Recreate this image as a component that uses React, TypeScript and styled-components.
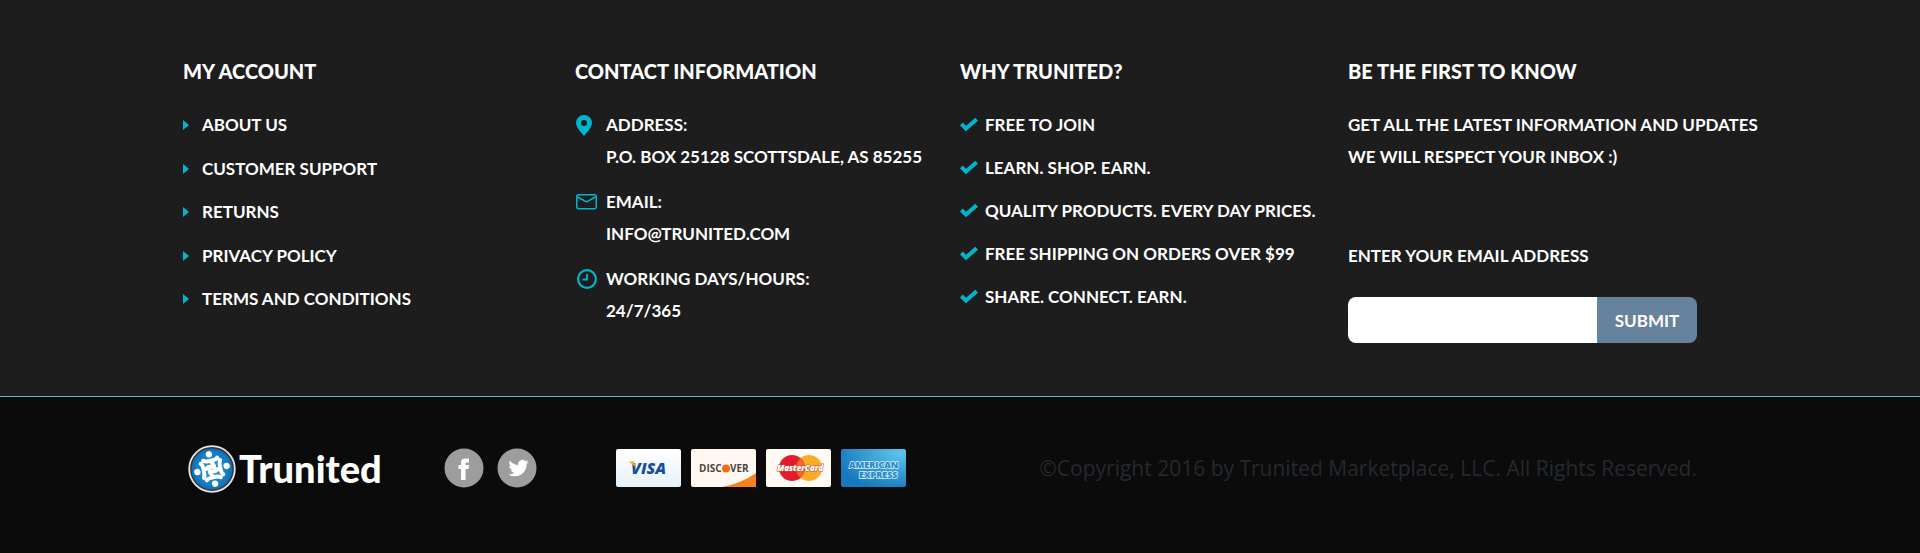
import React from "react";
import styled, { createGlobalStyle } from "styled-components";

const lato = `Lato, "Open Sans", sans-serif`;
const cyan = "#00b6cd";

const GlobalStyle = createGlobalStyle`
  *, *::before, *::after { box-sizing: border-box; }
  body { margin: 0; background: #0b0b0b; color: #fff; font-family: ${lato}; }
  ul, p, h2 { margin: 0; padding: 0; }
  ul { list-style: none; }
  a { color: inherit; text-decoration: none; }
`;

const Upper = styled.section`
  background: #1d1d1d;
  border-bottom: 1px solid #4cc3da;
  padding: 55px 160px 53px 183px;
`;

const Columns = styled.div`
  display: grid;
  grid-template-columns: 392fr 385fr 388fr 412fr;
`;

const Column = styled.section`
  min-width: 0;
  font-size: 17px;
  font-weight: 700;
  line-height: 32px;
  white-space: nowrap;
`;

const Heading = styled.h2`
  font-size: 20px;
  font-weight: 900;
  line-height: 32px;
  margin-bottom: 22px;
`;

const List = styled.ul<{ $gap: number; $minHeight?: number }>`
  display: flex;
  flex-direction: column;
  justify-content: space-between;
  gap: ${(p) => p.$gap}px;
  min-height: ${(p) => p.$minHeight ?? 0}px;
`;

const Item = styled.li<{ $icon: number }>`
  display: grid;
  grid-template-columns: ${(p) => p.$icon}px 1fr;
  svg { margin-top: 6px; }
`;

const IconCell = styled.span`
  display: flex;
  align-items: center;
  height: 32px;
  svg { margin: 0; }
`;

const Lines = styled.p`
  margin-bottom: 67px;
`;

const Form = styled.form`
  display: flex;
  flex-direction: column;
  align-items: flex-start;
`;

const Field = styled.div`
  display: flex;
  width: 349px;
  max-width: 100%;
  height: 46px;
  margin-top: 25px;
  border-radius: 8px;
  overflow: hidden;
`;

const Input = styled.input`
  flex: 1;
  min-width: 0;
  border: 0;
  padding: 0 12px;
  background: #fff;
  font: 400 17px ${lato};
`;

const Submit = styled.button`
  width: 100px;
  border: 0;
  background: #67829d;
  color: #fff;
  font: 700 17px ${lato};
`;

const Lower = styled.section`
  display: flex;
  align-items: center;
  min-height: 156px;
  padding: 0 223px 15px 186px;
`;

const Brand = styled.a`
  display: flex;
  margin-right: 59px;
`;

const Group = styled.div<{ $gap: number; $after: number }>`
  display: flex;
  gap: ${(p) => p.$gap}px;
  margin-right: ${(p) => p.$after}px;
  a { display: flex; }
`;

const Copyright = styled.p`
  margin-left: auto;
  color: #24292f;
  font: 400 21px/32px "Open Sans", sans-serif;
  white-space: nowrap;
`;

const Arrow = () => (
  <svg width="6" height="10" viewBox="0 0 6 10" aria-hidden="true"><path d="M0 0L6 5L0 10Z" fill={cyan} /></svg>
);
const Check = () => (
  <svg width="18" height="16" viewBox="0 0 18 16" aria-hidden="true"><path d="M1.400 7L6 11.600L16.600 2.200" fill="none" stroke={cyan} strokeWidth="4" /></svg>
);
const Pin = () => (
  <svg width="17" height="21" viewBox="-1 0 17 21" aria-hidden="true"><path fillRule="evenodd" fill={cyan} d="M8 0A8 8 0 0 1 16 8C16 12 11 17.500 8 21C5 17.500 0 12 0 8A8 8 0 0 1 8 0ZM8 5A3 3 0 1 0 8 11A3 3 0 1 0 8 5Z" /></svg>
);
const Mail = () => (
  <svg width="22" height="21" viewBox="-1 0 22 21" fill="none" stroke={cyan} strokeWidth="1.500" aria-hidden="true"><rect x=".75" y="2.750" width="19.500" height="14" rx="2" /><path d="M1.500 5L10.500 10L19.500 5" /></svg>
);
const Clock = () => (
  <svg width="22" height="21" viewBox="0 0 22 21" fill="none" stroke={cyan} aria-hidden="true"><circle cx="12" cy="10" r="8.900" strokeWidth="2.200" /><path d="M12 5V10.500H7.500" strokeWidth="1.800" /></svg>
);

const Figure = () => (
  <g>
    <circle cx="0" cy="-15" r="3.200" fill="#fff" />
    <path d="M-7-9.800Q-5-8.400-2-8.400H3Q6-8.400 7.500-10M1.500-8V-2.500H-3.500" fill="none" stroke="#fff" strokeWidth="4" strokeLinecap="round" strokeLinejoin="round" />
  </g>
);
const Logo = () => (
  <svg width="199" height="50" viewBox="0 0 199 50" role="img" aria-label="Trunited">
    <defs><radialGradient id="orb"><stop offset="0" stopColor="#36a2e4" /><stop offset="1" stopColor="#0c70b8" /></radialGradient></defs>
    <circle cx="26" cy="26" r="22.800" fill="#3b3432" stroke="#e8e4e2" strokeWidth="1.800" />
    <circle cx="26" cy="26" r="20.500" fill="url(#orb)" />
    {[0, 90, 180, 270].map((a) => <g key={a} transform={`translate(26 26) rotate(${a - 12})`}><Figure /></g>)}
    <text x="53" y="40" fontFamily={lato} fontSize="38" fontWeight="900" fill="#fff">Trunited</text>
  </svg>
);

const Facebook = () => (
  <svg width="40" height="40" viewBox="0 0 40 40" role="img" aria-label="Facebook"><circle cx="20" cy="20" r="19.500" fill="#9d9d9d" /><path fill="#fff" d="M17 32V21H14.500V17H17V14.500Q17 10.500 21.500 10.500H25V14.500H22.500Q21.500 14.500 21.500 15.500V17H25L24.500 21H21.500V32Z" /></svg>
);
const Twitter = () => (
  <svg width="40" height="40" viewBox="0 0 40 40" role="img" aria-label="Twitter"><circle cx="20" cy="20" r="19.500" fill="#9d9d9d" /><g transform="translate(11.500 10) scale(.84)"><path fill="#fff" d="M23.950 4.570a10 10 0 0 1-2.820.77 4.960 4.960 0 0 0 2.160-2.720c-.95.55-2 .95-3.130 1.180a4.920 4.920 0 0 0-8.380 4.480C7.690 8.090 4.070 6.130 1.640 3.160a4.820 4.820 0 0 0-.67 2.480c0 1.700.87 3.210 2.190 4.100a4.900 4.900 0 0 1-2.230-.62v.06a4.920 4.920 0 0 0 3.950 4.830 5 5 0 0 1-2.210.08 4.940 4.940 0 0 0 4.600 3.420A9.870 9.870 0 0 1 0 19.540a14 14 0 0 0 7.550 2.210c9.050 0 14-7.500 14-13.980 0-.21 0-.42-.02-.63a9.940 9.940 0 0 0 2.420-2.570Z" /></g></svg>
);

const cardFont = `"Open Sans", sans-serif`;
const Cards = () => (
  <>
    <svg width="65" height="38" viewBox="0 0 65 38" role="img" aria-label="Visa">
      <defs><linearGradient id="visa" x2="0" y2="1"><stop stopColor="#fff" /><stop offset="1" stopColor="#e7f1f8" /></linearGradient></defs>
      <rect width="65" height="38" rx="2" fill="url(#visa)" />
      <text x="15" y="25" fontFamily={cardFont} fontSize="16" fontWeight="800" fontStyle="italic" fill="#15509b">VISA</text>
      <path d="M13 12.500H18L20.500 19Z" fill="#f5a623" />
    </svg>
    <svg width="65" height="38" viewBox="0 0 65 38" role="img" aria-label="Discover">
      <rect width="65" height="38" rx="2" fill="#fff8f2" />
      <path d="M31 38Q51 34 65 24V38Z" fill="#f5821f" />
      <text x="8" y="23" fontFamily={cardFont} fontSize="10" fontWeight="700" fill="#4c4545">DISC</text>
      <circle cx="35" cy="19.500" r="4" fill="#f36b16" />
      <text x="39" y="23" fontFamily={cardFont} fontSize="10" fontWeight="700" fill="#4c4545">VER</text>
    </svg>
    <svg width="65" height="38" viewBox="0 0 65 38" role="img" aria-label="MasterCard">
      <rect width="65" height="38" rx="2" fill="#fffaf3" />
      <circle cx="43" cy="19" r="13" fill="#fbac27" /><circle cx="26" cy="19" r="13" fill="#e51b2c" />
      <path d="M34.500 9.200A13 13 0 0 1 34.500 28.800A13 13 0 0 1 34.500 9.200Z" fill="#f0652b" />
      <text x="34" y="22" textAnchor="middle" fontFamily={cardFont} fontSize="8" fontWeight="800" fontStyle="italic" fill="#fff" stroke="#b9573f" strokeWidth="1" paintOrder="stroke">MasterCard</text>
    </svg>
    <svg width="65" height="38" viewBox="0 0 65 38" role="img" aria-label="American Express">
      <defs><radialGradient id="amex" cx=".9" cy=".1" r="1"><stop stopColor="#5cc4ee" /><stop offset="1" stopColor="#1878bc" /></radialGradient></defs>
      <rect width="65" height="38" rx="2" fill="url(#amex)" />
      <g fontFamily={cardFont} fontSize="9" fontWeight="800" fill="#2589c7" stroke="#d8f0fb" strokeWidth="1.400" paintOrder="stroke"><text x="8" y="19">AMERICAN</text><text x="18" y="29">EXPRESS</text></g>
    </svg>
  </>
);

const account = ["ABOUT US", "CUSTOMER SUPPORT", "RETURNS", "PRIVACY POLICY", "TERMS AND CONDITIONS"];
const reasons = ["FREE TO JOIN", "LEARN. SHOP. EARN.", "QUALITY PRODUCTS. EVERY DAY PRICES.", "FREE SHIPPING ON ORDERS OVER $99", "SHARE. CONNECT. EARN."];

export default function App() {
  return (
    <footer>
      <GlobalStyle />
      <Upper>
        <Columns>
          <Column>
            <Heading>MY ACCOUNT</Heading>
            <List $gap={11} $minHeight={206}>
              {account.map((t) => <Item key={t} $icon={19}><IconCell><Arrow /></IconCell><a href="#">{t}</a></Item>)}
            </List>
          </Column>
          <Column>
            <Heading>CONTACT INFORMATION</Heading>
            <List $gap={13}>
              <Item $icon={31}><Pin /><div>ADDRESS:<br />P.O. BOX 25128 SCOTTSDALE, AS 85255</div></Item>
              <Item $icon={31}><Mail /><div>EMAIL:<br /><a href="mailto:info@trunited.com">INFO@TRUNITED.COM</a></div></Item>
              <Item $icon={31}><Clock /><div>WORKING DAYS/HOURS:<br />24/7/365</div></Item>
            </List>
          </Column>
          <Column>
            <Heading>WHY TRUNITED?</Heading>
            <List $gap={11}>
              {reasons.map((t) => <Item key={t} $icon={25}><IconCell><Check /></IconCell><span>{t}</span></Item>)}
            </List>
          </Column>
          <Column>
            <Heading>BE THE FIRST TO KNOW</Heading>
            <Lines>GET ALL THE LATEST INFORMATION AND UPDATES<br />WE WILL RESPECT YOUR INBOX :)</Lines>
            <Form onSubmit={(e) => e.preventDefault()}>
              <label htmlFor="email">ENTER YOUR EMAIL ADDRESS</label>
              <Field>
                <Input id="email" type="email" />
                <Submit type="submit">SUBMIT</Submit>
              </Field>
            </Form>
          </Column>
        </Columns>
      </Upper>
      <Lower>
        <Brand href="#"><Logo /></Brand>
        <Group $gap={13} $after={79}>
          <a href="#"><Facebook /></a>
          <a href="#"><Twitter /></a>
        </Group>
        <Group $gap={10} $after={24}><Cards /></Group>
        <Copyright>©Copyright 2016 by Trunited Marketplace, LLC. All Rights Reserved.</Copyright>
      </Lower>
    </footer>
  );
}
